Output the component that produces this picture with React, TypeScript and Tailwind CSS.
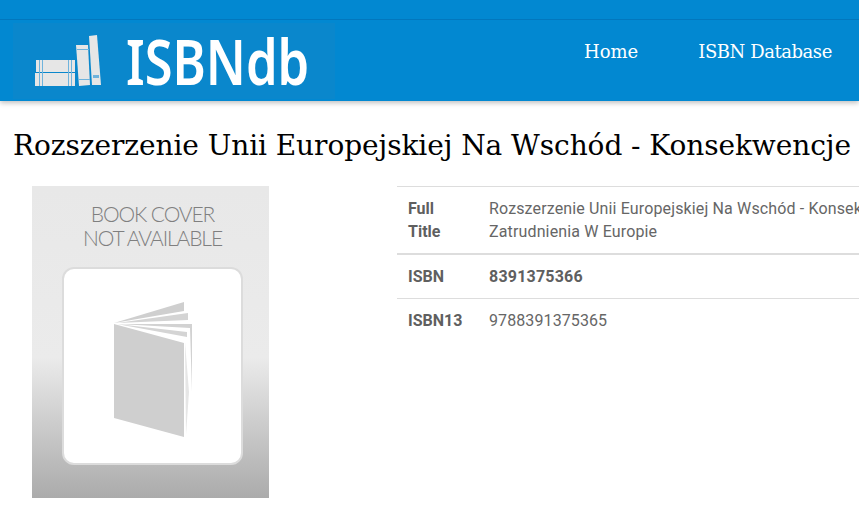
import React from 'react';

const rows = [
  { label: 'ISBN', value: '8391375366', bold: true },
  { label: 'ISBN13', value: '9788391375365', bold: false },
];

const BookIcon: React.FC = () => (
  <svg viewBox="0 0 78 135" className="w-[78px] h-[135px] mt-[6px]">
    <polygon points="0,21 70,0 70,9" fill="#cfcfcf" />
    <polygon points="3,21 74,11 74,18" fill="#d4d4d4" />
    <polygon points="5,22 78,22 78,90 76,26" fill="#d2d2d2" />
    <polygon points="3,22 73,30 73,35" fill="#d4d4d4" />
    <polygon points="0,22 70,41 70,135 0,116" fill="#cfcfcf" />
    <polygon points="71,40 75,90 72,133" fill="#e6e6e6" />
  </svg>
);

const LogoBooks: React.FC = () => (
  <svg viewBox="0 0 66 52" className="w-[66px] h-[52px] shrink-0">
    <g fill="#e6e6e6">
      <rect x="1" y="25" width="39" height="12" />
      <rect x="0" y="38" width="40" height="13" />
      <polygon points="41,10 53,10 55,50 44,51" />
      <polygon points="54,1 62,0 66,50 57,50" />
    </g>
    <g fill="#6fb3dc">
      <rect x="4" y="25" width="1" height="26" />
      <rect x="7" y="25" width="1" height="26" />
      <rect x="33" y="25" width="1" height="26" />
      <rect x="36" y="25" width="1" height="26" />
      <rect x="42" y="14" width="12" height="1" />
      <rect x="44" y="44" width="11" height="1" />
      <rect x="58" y="40" width="6" height="3" />
    </g>
  </svg>
);

export default function App() {
  return (
    <div className="w-[859px] h-[510px] overflow-hidden bg-white">
      {/* Cabecera */}
      <header className="h-[101px] bg-[#0288d1] shadow-[0_2px_5px_rgba(0,0,0,0.25)] relative">
        <div className="h-[20px] border-b border-[#0277bd]" />
        <div className="flex items-center h-[81px] pl-[13px]">
          <div className="flex items-center w-[322px] h-[76px] pl-[22px] shrink-0 bg-[#0a87cc]">
            <LogoBooks />
            <span className="ml-[25px] origin-left scale-x-[0.79] text-white text-[64px] leading-none font-semibold font-['Noto_Sans',sans-serif]">
              ISBNdb
            </span>
          </div>
          <nav className="flex ml-[249px] -mt-[19px] gap-[60px] text-white text-[18px] whitespace-nowrap font-['DejaVu_Serif',serif]">
            <a>Home</a>
            <a className="tracking-[-0.45px]">ISBN Database</a>
          </nav>
        </div>
      </header>

      <h1 className="mt-[25px] ml-[13px] text-[28px] leading-[40px] tracking-[-0.07px] text-black whitespace-nowrap font-['DejaVu_Serif',serif]">
        Rozszerzenie Unii Europejskiej Na Wschód - Konsekwencje
      </h1>

      <div className="flex mt-[20px] font-['Roboto',sans-serif]">
        {/* Portada */}
        <div className="ml-[32px] w-[237px] h-[312px] pl-[4px] flex flex-col items-center shrink-0 bg-gradient-to-b from-[#e8e8e8] via-[#ebebeb] via-55% to-[#ababab]">
          <div className="mt-[16px] text-[21px] leading-[24px] tracking-[-1.1px] font-light text-center text-[#7f7f7f] font-['Lato',sans-serif]">
            BOOK COVER
            <br />
            NOT AVAILABLE
          </div>
          <div className="mt-[17px] w-[181px] h-[198px] rounded-[12px] border-2 border-[#dcdcdc] bg-white flex items-center justify-center blur-[0.4px]">
            <BookIcon />
          </div>
        </div>

        {/* Tabla de datos */}
        <div className="ml-[128px] flex-1 min-w-0 overflow-hidden text-[16px] leading-[23px] text-[#666]">
          <div className="flex border-t border-[#ddd] border-b-2 py-[10px]">
            <div className="w-[92px] pl-[11px] pr-[40px] font-bold text-[#5f5f5f] shrink-0">Full Title</div>
            <div className="whitespace-nowrap tracking-[0.14px]">
              Rozszerzenie Unii Europejskiej Na Wschód - Konsekwencje
              <br />
              Zatrudnienia W Europie
            </div>
          </div>
          {rows.map((row) => (
            <div key={row.label} className="flex border-b border-[#ddd] py-[10px] last:border-b-0">
              <div className="w-[92px] pl-[11px] font-bold text-[#5f5f5f] shrink-0">{row.label}</div>
              <div className={row.bold ? 'font-bold text-[#5f5f5f] tracking-[0.2px]' : 'tracking-[0.1px]'}>{row.value}</div>
            </div>
          ))}
        </div>
      </div>
    </div>
  );
}
